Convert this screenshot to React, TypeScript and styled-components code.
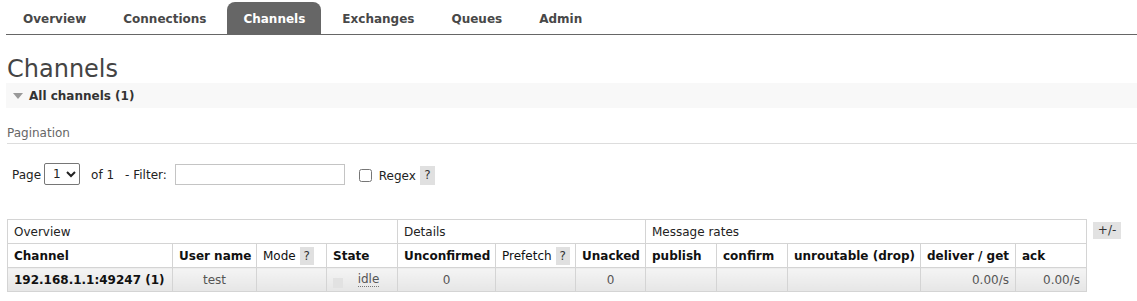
import React from 'react';
import styled, { createGlobalStyle } from 'styled-components';

const GlobalStyle = createGlobalStyle`
  body {
    margin: 0;
    background: #fff;
    font-family: 'DejaVu Sans', Verdana, sans-serif;
    font-size: 12px;
    color: #484848;
  }
`;

const Page = styled.div`
  padding-left: 6px;
`;

const Nav = styled.ul`
  display: flex;
  align-items: flex-end;
  height: 34px;
  margin: 0;
  padding: 0 0 0 1px;
  list-style: none;
  border-bottom: 1px solid #666;
`;

const Tab = styled.li<{ active?: boolean }>`
  height: 32px;
  line-height: 34px;
  padding: 0 16px;
  margin-right: 5px;
  border-radius: 8px 8px 0 0;
  font-weight: bold;
  color: ${(p) => (p.active ? '#fff' : '#484848')};
  background: ${(p) => (p.active ? '#666' : 'transparent')};
`;

const Title = styled.h1`
  margin: 21px 0 0 1px;
  font-size: 24px;
  line-height: 26px;
  font-weight: normal;
  color: #444;
`;

const SectionBar = styled.div`
  display: flex;
  align-items: center;
  height: 25px;
  margin-top: 1px;
  padding-left: 7px;
  background: #f8f8f8;
  font-weight: bold;
  color: #333;
`;

const Arrow = styled.span`
  width: 0;
  height: 0;
  margin-right: 6px;
  border-left: 5px solid transparent;
  border-right: 5px solid transparent;
  border-top: 6px solid #999;
`;

const SubTitle = styled.h3`
  margin: 18px 0 0 1px;
  padding-bottom: 2px;
  font-size: 12px;
  line-height: 15px;
  font-weight: normal;
  color: #666;
  border-bottom: 1px solid #ddd;
`;

const FilterRow = styled.div`
  display: flex;
  align-items: center;
  margin-top: 19px;
  padding-left: 6px;
  color: #222;
`;

const Label = styled.span<{ gap?: number; drop?: boolean }>`
  margin-left: ${(p) => p.gap ?? 0}px;
  padding-top: ${(p) => (p.drop ? 4 : 1)}px;
`;

const Select = styled.select`
  width: 36px;
  height: 22px;
  margin-left: 3px;
  padding: 0 0 0 4px;
  border: 1px solid #767676;
  border-radius: 2px;
  background: #fff;
  font-family: inherit;
  font-size: 12px;
  color: #222;
`;

const TextInput = styled.input`
  width: 170px;
  height: 21px;
  margin-left: 8px;
  padding: 0 4px;
  box-sizing: border-box;
  border: 1px solid #c4c4c4;
  font-family: inherit;
  font-size: 12px;
`;

const Check = styled.input`
  width: 13px;
  height: 13px;
  margin: 2px 0 0 14px;
`;

const Help = styled.span<{ tall?: boolean }>`
  display: inline-block;
  margin-left: 4px;
  width: ${(p) => (p.tall ? 15 : 14)}px;
  height: ${(p) => (p.tall ? 19 : 18)}px;
  line-height: ${(p) => (p.tall ? 19 : 18)}px;
  margin-top: ${(p) => (p.tall ? 3 : 0)}px;
  text-align: center;
  vertical-align: middle;
  background: #e0e0e0;
  color: #333;
  font-weight: normal;
`;

const TableArea = styled.div`
  display: flex;
  align-items: flex-start;
  margin-top: 34px;
  padding-left: 1px;
`;

const Table = styled.table`
  border-collapse: collapse;
  table-layout: fixed;
  width: 1080px;
`;

const GroupCell = styled.th`
  height: 23px;
  padding: 0 6px;
  border: 1px solid #d4d4d4;
  text-align: left;
  font-weight: normal;
  color: #222;
`;

const HeadCell = styled.th<{ plain?: boolean }>`
  height: 23px;
  padding: 0 6px;
  border: 1px solid #d4d4d4;
  text-align: left;
  white-space: nowrap;
  font-weight: ${(p) => (p.plain ? 'normal' : 'bold')};
  color: #111;
`;

const Cell = styled.td<{ align?: 'left' | 'center' | 'right'; strong?: boolean }>`
  height: 23px;
  padding: 0 6px;
  border: 1px solid #d4d4d4;
  white-space: nowrap;
  background: linear-gradient(#f4f4f4, #e6e6e6);
  text-align: ${(p) => p.align ?? 'left'};
  font-weight: ${(p) => (p.strong ? 'bold' : 'normal')};
  color: ${(p) => (p.strong ? '#111' : '#555')};
`;

const StatusBox = styled.span`
  float: left;
  width: 10px;
  height: 10px;
  margin-top: 6px;
  background: #e2e2e2;
`;

const Abbr = styled.abbr`
  margin-left: 3px;
  text-decoration: none;
  border-bottom: 1px dotted #777;
`;

const ToggleColumns = styled.span`
  margin: 3px 0 0 6px;
  width: 28px;
  height: 17px;
  line-height: 17px;
  text-align: center;
  background: #e2e2e2;
  color: #333;
`;

const tabs = ['Overview', 'Connections', 'Channels', 'Exchanges', 'Queues', 'Admin'];
const widths = [165, 84, 70, 71, 98, 80, 70, 71, 71, 133, 95, 71];

export default function App() {
  return (
    <Page>
      <GlobalStyle />
      <Nav>
        {tabs.map((t) => (
          <Tab key={t} active={t === 'Channels'}>
            {t}
          </Tab>
        ))}
      </Nav>
      <Title>Channels</Title>
      <SectionBar>
        <Arrow />
        All channels (1)
      </SectionBar>
      <SubTitle>Pagination</SubTitle>
      <FilterRow>
        <Label>Page</Label>
        <Select defaultValue="1">
          <option value="1">1</option>
        </Select>
        <Label gap={11}>of 1</Label>
        <Label gap={11}>- Filter:</Label>
        <TextInput type="text" />
        <Check type="checkbox" />
        <Label gap={7} drop>
          Regex
        </Label>
        <Help tall>?</Help>
      </FilterRow>
      <TableArea>
        <Table>
          <colgroup>
            {widths.map((w, i) => (
              <col key={i} style={{ width: w }} />
            ))}
          </colgroup>
          <thead>
            <tr>
              <GroupCell colSpan={4}>Overview</GroupCell>
              <GroupCell colSpan={3}>Details</GroupCell>
              <GroupCell colSpan={5}>Message rates</GroupCell>
            </tr>
            <tr>
              <HeadCell>Channel</HeadCell>
              <HeadCell>User name</HeadCell>
              <HeadCell plain>
                Mode<Help>?</Help>
              </HeadCell>
              <HeadCell>State</HeadCell>
              <HeadCell>Unconfirmed</HeadCell>
              <HeadCell plain>
                Prefetch<Help>?</Help>
              </HeadCell>
              <HeadCell>Unacked</HeadCell>
              <HeadCell>publish</HeadCell>
              <HeadCell>confirm</HeadCell>
              <HeadCell>unroutable (drop)</HeadCell>
              <HeadCell>deliver / get</HeadCell>
              <HeadCell>ack</HeadCell>
            </tr>
          </thead>
          <tbody>
            <tr>
              <Cell strong>192.168.1.1:49247 (1)</Cell>
              <Cell align="center">test</Cell>
              <Cell />
              <Cell align="center">
                <StatusBox />
                <Abbr>idle</Abbr>
              </Cell>
              <Cell align="center">0</Cell>
              <Cell />
              <Cell align="center">0</Cell>
              <Cell />
              <Cell />
              <Cell />
              <Cell align="right">0.00/s</Cell>
              <Cell align="right">0.00/s</Cell>
            </tr>
          </tbody>
        </Table>
        <ToggleColumns>+/-</ToggleColumns>
      </TableArea>
    </Page>
  );
}
